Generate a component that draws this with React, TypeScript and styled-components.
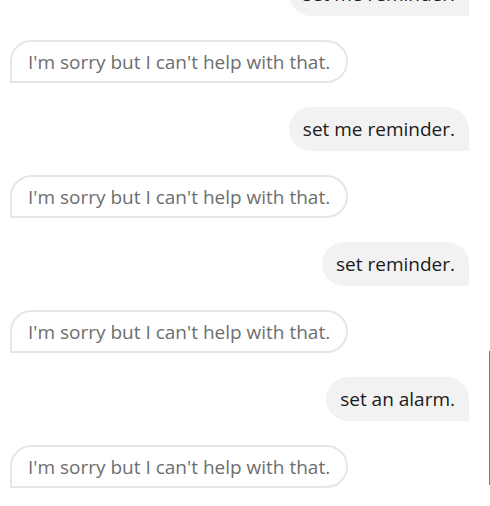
import React from "react";
import styled, { createGlobalStyle } from "styled-components";

const GlobalStyle = createGlobalStyle`
  html, body {
    margin: 0;
    padding: 0;
    background: #ffffff;
  }
  body {
    font-family: "Open Sans", "Noto Sans", sans-serif;
    overflow: hidden;
  }
`;

interface Message {
  from: "user" | "bot";
  text: string;
}

const messages: Message[] = [
  { from: "user", text: "set me reminder." },
  { from: "bot", text: "I'm sorry but I can't help with that." },
  { from: "user", text: "set me reminder." },
  { from: "bot", text: "I'm sorry but I can't help with that." },
  { from: "user", text: "set reminder." },
  { from: "bot", text: "I'm sorry but I can't help with that." },
  { from: "user", text: "set an alarm." },
  { from: "bot", text: "I'm sorry but I can't help with that." },
];

const Viewport = styled.div`
  position: relative;
  width: 490px;
  height: 506px;
  overflow: hidden;
`;

const Thread = styled.div`
  display: flex;
  flex-direction: column;
  gap: 24px;
  margin-top: -28px;
  padding: 0 21px 0 10px;
`;

const Row = styled.div<{ $mine: boolean }>`
  display: flex;
  justify-content: ${({ $mine }) => ($mine ? "flex-end" : "flex-start")};
`;

const Bubble = styled.div<{ $mine: boolean }>`
  box-sizing: border-box;
  height: ${({ $mine }) => ($mine ? "44px" : "43px")};
  display: flex;
  align-items: center;
  padding: 0 ${({ $mine }) => ($mine ? "14px" : "16px")};
  font-size: 19px;
  line-height: 24px;
  white-space: nowrap;
  color: ${({ $mine }) => ($mine ? "#1a1a1a" : "#6e6e6e")};
  background: ${({ $mine }) => ($mine ? "#f2f2f2" : "#ffffff")};
  border: ${({ $mine }) => ($mine ? "none" : "2px solid #e6e6e6")};
  border-radius: ${({ $mine }) => ($mine ? "22px 22px 0 22px" : "22px 22px 22px 0")};
`;

const ScrollThumb = styled.div`
  position: absolute;
  right: 0;
  top: 351px;
  width: 1px;
  height: 134px;
  background: #7a7a7a;
`;

export default function App() {
  return (
    <>
      <GlobalStyle />
      <Viewport>
        <Thread>
          {messages.map((m, i) => (
            <Row key={i} $mine={m.from === "user"}>
              <Bubble $mine={m.from === "user"}>{m.text}</Bubble>
            </Row>
          ))}
        </Thread>
        <ScrollThumb />
      </Viewport>
    </>
  );
}
